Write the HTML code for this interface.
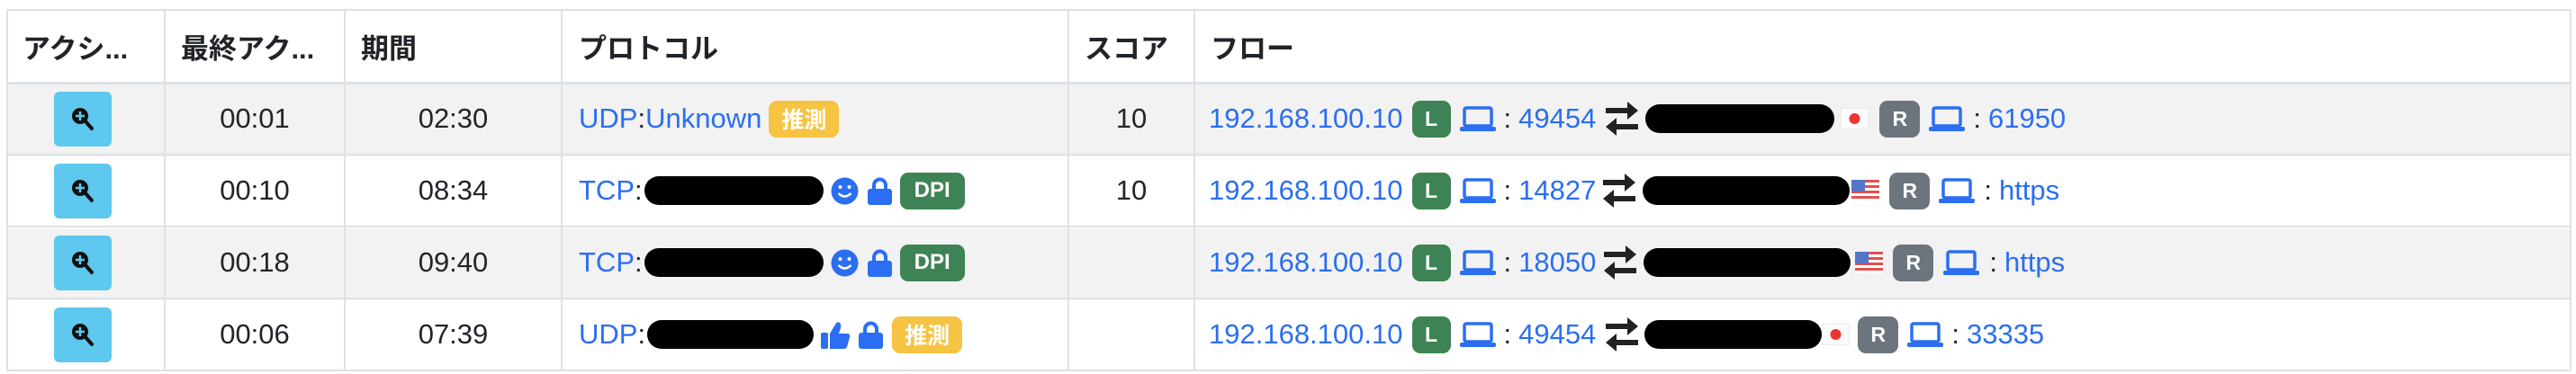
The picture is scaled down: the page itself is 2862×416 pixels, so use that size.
<!DOCTYPE html>
<html><head><meta charset="utf-8"><style>
body{margin:0;width:2862px;height:416px;background:#fff;overflow:hidden;position:relative;font-family:"Liberation Sans","Noto Sans CJK JP",sans-serif;font-size:31px;color:#212529}
.h{position:absolute;background:#dee2e6;height:2px;left:7px;width:2848px}
.v{position:absolute;background:#dee2e6;width:2px;top:11px;height:401px}
.bg{position:absolute;left:7px;width:2848px;height:80px;background:#f2f2f2}
.c{position:absolute;height:80px;display:flex;align-items:center;white-space:nowrap}
.hd{font-weight:bold}
.ctr{justify-content:center}
.a{color:#2b6ef2}
.btn{width:64px;height:61px;background:#5ec8ee;border-radius:6px;display:flex;align-items:center;justify-content:center}
.bd{height:41px;border-radius:9px;color:#fff;font-weight:bold;font-size:23px;display:flex;align-items:center;justify-content:center}
.y{background:#f6c342;width:78px;font-size:25px}
.g{background:#3e8356;width:43px}
.dpi{background:#3e8356;width:72px;font-size:24px}
.r{background:#6c757d;width:45px}
.pill{height:32px;background:#000;border-radius:16px}
</style></head><body>
<div class="bg" style="top:94px"></div>
<div class="bg" style="top:254px"></div>
<div class="h" style="top:10px"></div>
<div class="h" style="top:91px;height:3px"></div>
<div class="h" style="top:171px"></div>
<div class="h" style="top:251px"></div>
<div class="h" style="top:331px"></div>
<div class="h" style="top:411px"></div>
<div class="v" style="left:7px"></div><div class="v" style="left:182px"></div><div class="v" style="left:382px"></div><div class="v" style="left:623px"></div><div class="v" style="left:1186px"></div><div class="v" style="left:1326px"></div><div class="v" style="left:2855px"></div>

<div class="c hd" style="top:11px;left:25px">アクシ...</div>
<div class="c hd" style="top:11px;left:201px">最終アク...</div>
<div class="c hd" style="top:11px;left:401px">期間</div>
<div class="c hd" style="top:11px;left:643px">プロトコル</div>
<div class="c hd" style="top:11px;left:1205px">スコア</div>
<div class="c hd" style="top:11px;left:1345px">フロー</div>

<svg width="0" height="0" style="position:absolute"><defs>
<symbol id="mag" viewBox="0 0 28 26"><circle cx="11" cy="10" r="9" fill="#111"/><path d="M11 5v10M6 10h10" stroke="#5ec8ee" stroke-width="2.6"/><path d="M17 16l7 8" stroke="#111" stroke-width="4" stroke-linecap="round"/></symbol>
<symbol id="lap" viewBox="0 0 40 28"><rect x="5" y="2" width="30" height="20" rx="2" fill="none" stroke="#2b6ef2" stroke-width="3.5"/><rect x="0" y="23" width="40" height="5" rx="2" fill="#2b6ef2"/></symbol>
<symbol id="arr" viewBox="0 0 40 40"><path d="M2 11h30" stroke="#222" stroke-width="6"/><path d="M26 1l12 10-12 10z" fill="#222"/><path d="M38 29H8" stroke="#222" stroke-width="6"/><path d="M14 19L2 29l12 10z" fill="#222"/></symbol>
<symbol id="jp" viewBox="0 0 31 24"><rect width="31" height="24" fill="#fbfbfb" stroke="#ddd"/><circle cx="15.5" cy="12" r="6" fill="#e33"/></symbol>
<symbol id="us" viewBox="0 0 31 24"><rect width="31" height="24" fill="#fff"/><g fill="#e25050"><rect y="0" width="31" height="3"/><rect y="6" width="31" height="3"/><rect y="12" width="31" height="3"/><rect y="18" width="31" height="3"/></g><rect width="15" height="13" fill="#5575c8"/></symbol>
<symbol id="smile" viewBox="0 0 31 31"><circle cx="15.5" cy="15.5" r="15" fill="#2b6ef2"/><circle cx="10.5" cy="11" r="2" fill="#fff"/><circle cx="20.5" cy="11" r="2" fill="#fff"/><path d="M8.5 18q7 7 14 0" stroke="#fff" stroke-width="2.5" fill="none"/></symbol>
<symbol id="lock" viewBox="0 0 29 31"><path d="M8 14V9a6.5 6.5 0 0 1 13 0v5" stroke="#2b6ef2" stroke-width="4" fill="none"/><rect x="1" y="13" width="27" height="18" rx="3" fill="#2b6ef2"/></symbol>
<symbol id="thumb" viewBox="0 0 33 31"><rect x="0" y="13" width="8" height="18" rx="2" fill="#2b6ef2"/><path d="M10 14l6-10q2-4 5-2 2 2 1 6l-2 6h9q4 0 3 4l-3 11q-1 2-4 2H10z" fill="#2b6ef2"/></symbol>
</defs></svg>

<div class="c" style="top:92px;left:60px"><div class="btn"><svg width="28" height="26"><use href="#mag"/></svg></div></div>
<div class="c" style="top:172px;left:60px"><div class="btn"><svg width="28" height="26"><use href="#mag"/></svg></div></div>
<div class="c" style="top:252px;left:60px"><div class="btn"><svg width="28" height="26"><use href="#mag"/></svg></div></div>
<div class="c" style="top:332px;left:60px"><div class="btn"><svg width="28" height="26"><use href="#mag"/></svg></div></div>

<div class="c ctr" style="top:92px;left:183px;width:200px">00:01</div>
<div class="c ctr" style="top:172px;left:183px;width:200px">00:10</div>
<div class="c ctr" style="top:252px;left:183px;width:200px">00:18</div>
<div class="c ctr" style="top:332px;left:183px;width:200px">00:06</div>

<div class="c ctr" style="top:92px;left:383px;width:241px">02:30</div>
<div class="c ctr" style="top:172px;left:383px;width:241px">08:34</div>
<div class="c ctr" style="top:252px;left:383px;width:241px">09:40</div>
<div class="c ctr" style="top:332px;left:383px;width:241px">07:39</div>

<div class="c" style="top:92px;left:643px"><span class="a">UDP</span>:<span class="a">Unknown</span><div class="bd y" style="margin-left:8px">推測</div></div>
<div class="c" style="top:172px;left:643px"><span class="a">TCP</span>:<div class="pill" style="width:199px;margin-left:2px"></div><svg width="31" height="31" style="margin-left:8px"><use href="#smile"/></svg><svg width="29" height="31" style="margin-left:9px"><use href="#lock"/></svg><div class="bd dpi" style="margin-left:8px">DPI</div></div>
<div class="c" style="top:252px;left:643px"><span class="a">TCP</span>:<div class="pill" style="width:199px;margin-left:2px"></div><svg width="31" height="31" style="margin-left:8px"><use href="#smile"/></svg><svg width="29" height="31" style="margin-left:9px"><use href="#lock"/></svg><div class="bd dpi" style="margin-left:8px">DPI</div></div>
<div class="c" style="top:332px;left:643px"><span class="a">UDP</span>:<div class="pill" style="width:185px;margin-left:2px"></div><svg width="33" height="31" style="margin-left:8px"><use href="#thumb"/></svg><svg width="29" height="31" style="margin-left:8px"><use href="#lock"/></svg><div class="bd y" style="margin-left:9px">推測</div></div>

<div class="c ctr" style="top:92px;left:1187px;width:140px">10</div>
<div class="c ctr" style="top:172px;left:1187px;width:140px">10</div>

<div class="c" style="top:92px;left:1343px"><span class="a">192.168.100.10</span><div class="bd g" style="margin-left:10px">L</div><svg width="40" height="28" style="margin-left:10px"><use href="#lap"/></svg><span style="margin-left:9px">:</span><span class="a" style="margin-left:8px">49454</span><svg width="40" height="40" style="margin-left:9px"><use href="#arr"/></svg><div class="pill" style="width:210px;margin-left:6px"></div><svg width="31" height="24" style="margin-left:7px"><use href="#jp"/></svg><div class="bd r" style="margin-left:12px">R</div><svg width="40" height="28" style="margin-left:10px"><use href="#lap"/></svg><span style="margin-left:9px">:</span><span class="a" style="margin-left:8px">61950</span></div>
<div class="c" style="top:172px;left:1343px"><span class="a">192.168.100.10</span><div class="bd g" style="margin-left:10px">L</div><svg width="40" height="28" style="margin-left:10px"><use href="#lap"/></svg><span style="margin-left:9px">:</span><span class="a" style="margin-left:8px">14827</span><svg width="40" height="40" style="margin-left:6px"><use href="#arr"/></svg><div class="pill" style="width:230px;margin-left:6px"></div><svg width="31" height="24" style="margin-left:2px"><use href="#us"/></svg><div class="bd r" style="margin-left:11px">R</div><svg width="40" height="28" style="margin-left:10px"><use href="#lap"/></svg><span style="margin-left:10px">:</span><span class="a" style="margin-left:8px">https</span></div>
<div class="c" style="top:252px;left:1343px"><span class="a">192.168.100.10</span><div class="bd g" style="margin-left:10px">L</div><svg width="40" height="28" style="margin-left:10px"><use href="#lap"/></svg><span style="margin-left:9px">:</span><span class="a" style="margin-left:8px">18050</span><svg width="40" height="40" style="margin-left:7px"><use href="#arr"/></svg><div class="pill" style="width:230px;margin-left:6px"></div><svg width="31" height="24" style="margin-left:5px"><use href="#us"/></svg><div class="bd r" style="margin-left:11px">R</div><svg width="40" height="28" style="margin-left:11px"><use href="#lap"/></svg><span style="margin-left:11px">:</span><span class="a" style="margin-left:8px">https</span></div>
<div class="c" style="top:332px;left:1343px"><span class="a">192.168.100.10</span><div class="bd g" style="margin-left:10px">L</div><svg width="40" height="28" style="margin-left:10px"><use href="#lap"/></svg><span style="margin-left:9px">:</span><span class="a" style="margin-left:8px">49454</span><svg width="40" height="40" style="margin-left:9px"><use href="#arr"/></svg><div class="pill" style="width:197px;margin-left:5px"></div><svg width="31" height="24"><use href="#jp"/></svg><div class="bd r" style="margin-left:9px">R</div><svg width="40" height="28" style="margin-left:10px"><use href="#lap"/></svg><span style="margin-left:9px">:</span><span class="a" style="margin-left:8px">33335</span></div>
</body></html>
